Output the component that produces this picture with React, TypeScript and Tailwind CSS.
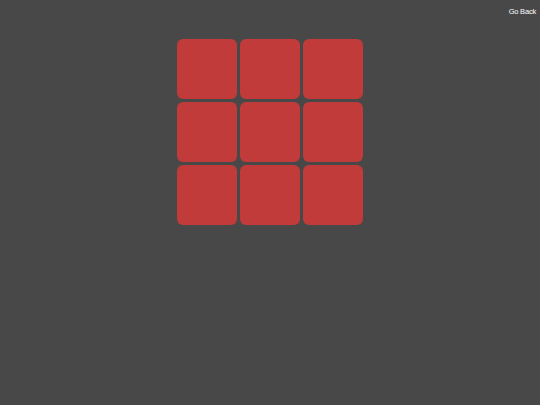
export default function App() {
  const tiles = Array.from({ length: 9 });
  return (
    <div className="relative w-[540px] h-[405px] bg-[#484848] font-['Liberation_Sans',sans-serif] overflow-hidden">
      <div className="absolute right-[4px] top-[7px] text-white text-[7.5px] leading-[10px] tracking-[-0.2px]">Go Back</div>
      <div className="flex justify-center pt-[39px]">
        <div className="grid grid-cols-[60px_60px_60px] auto-rows-[60px] gap-[3px]">
          {tiles.map((_, i) => (
            <div key={i} className="bg-[#c13b3b] rounded-[6px]" />
          ))}
        </div>
      </div>
    </div>
  );
}
